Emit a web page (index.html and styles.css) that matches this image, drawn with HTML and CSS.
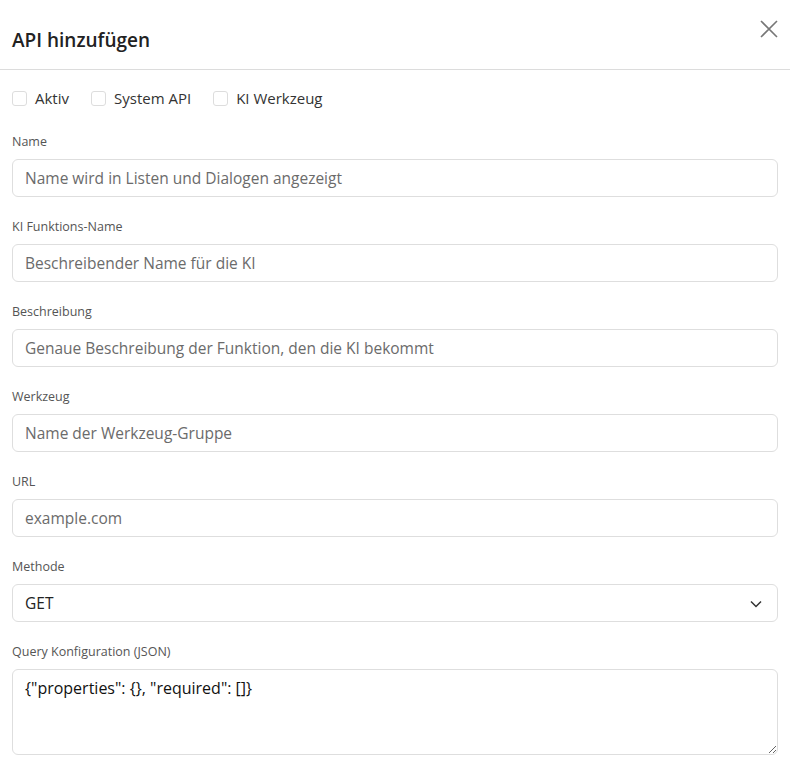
FILE: index.html
```html
<!DOCTYPE html>
<html lang="de">
<head>
    <meta charset="UTF-8">
    <meta name="viewport" content="width=device-width, initial-scale=1.0">
    <title>API hinzufügen</title>
    <link rel="stylesheet" href="styles.css">
</head>
<body>
    <div class="dialog">
        <div class="dialog-header">
            <h2>API hinzufügen</h2>
            <button class="close-btn" aria-label="Schließen">
                <svg width="18" height="18" viewBox="0 0 18 18"><path d="M1 1 L17 17 M17 1 L1 17" stroke="#777" stroke-width="1.6" fill="none"/></svg>
            </button>
        </div>
        <div class="dialog-body">
            <div class="checks">
                <label><input type="checkbox"> Aktiv</label>
                <label><input type="checkbox"> System API</label>
                <label><input type="checkbox"> KI Werkzeug</label>
            </div>
            <div class="field">
                <label for="name">Name</label>
                <input type="text" id="name" placeholder="Name wird in Listen und Dialogen angezeigt">
            </div>
            <div class="field">
                <label for="fname">KI Funktions-Name</label>
                <input type="text" id="fname" placeholder="Beschreibender Name für die KI">
            </div>
            <div class="field">
                <label for="desc">Beschreibung</label>
                <input type="text" id="desc" placeholder="Genaue Beschreibung der Funktion, den die KI bekommt">
            </div>
            <div class="field">
                <label for="tool">Werkzeug</label>
                <input type="text" id="tool" placeholder="Name der Werkzeug-Gruppe">
            </div>
            <div class="field">
                <label for="url">URL</label>
                <input type="text" id="url" placeholder="example.com">
            </div>
            <div class="field">
                <label for="method">Methode</label>
                <div class="select-wrap">
                    <select id="method">
                        <option>GET</option>
                        <option>POST</option>
                        <option>PUT</option>
                        <option>DELETE</option>
                    </select>
                    <svg class="chevron" width="12" height="8" viewBox="0 0 12 8"><path d="M1 1.5 L6 6.5 L11 1.5" stroke="#333" stroke-width="1.5" fill="none"/></svg>
                </div>
            </div>
            <div class="field">
                <label for="query">Query Konfiguration (JSON)</label>
                <textarea id="query">{"properties": {}, "required": []}</textarea>
            </div>
        </div>
    </div>
</body>
</html>
```

FILE: styles.css
```css
body {
    margin: 0;
    font-family: "Open Sans", "Noto Sans", Arial, sans-serif;
    background: #fff;
    color: #212529;
}
.dialog {
    width: 790px;
}
.dialog-header {
    display: flex;
    justify-content: space-between;
    align-items: center;
    height: 70px;
    padding: 0 12px;
    border-bottom: 1px solid #dcdcdc;
    box-sizing: border-box;
}
.dialog-header h2 {
    margin: 0;
    font-size: 19px;
    font-weight: 600;
    color: #222;
    padding-top: 10px;
}
.close-btn {
    border: none;
    background: none;
    padding: 0;
    margin-top: -12px;
    cursor: pointer;
    display: flex;
}
.dialog-body {
    padding: 18px 12px 0 12px;
}
.checks {
    display: flex;
    gap: 22px;
    margin-bottom: 25px;
}
.checks label {
    display: flex;
    align-items: center;
    gap: 8px;
    font-size: 15px;
    color: #333;
}
.checks input {
    appearance: none;
    width: 15px;
    height: 15px;
    margin: 0;
    border: 1px solid #ddd;
    border-radius: 3px;
    background: #fff;
}
.field {
    display: flex;
    flex-direction: column;
    margin-bottom: 21px;
}
.field label {
    font-size: 12.5px;
    color: #555;
    margin-bottom: 9px;
    line-height: 17px;
}
.field input,
.field select,
.field textarea {
    font-family: inherit;
    font-size: 15.5px;
    height: 38px;
    box-sizing: border-box;
    border: 1px solid #dedede;
    border-radius: 6px;
    padding: 0 12px;
    color: #222;
    background: #fff;
    width: 766px;
}
.field input::placeholder {
    color: #6b6b6b;
}
.select-wrap {
    position: relative;
}
.field select {
    appearance: none;
}
.chevron {
    position: absolute;
    right: 16px;
    top: 16px;
    pointer-events: none;
}
.field textarea {
    height: 86px;
    padding: 7px 12px;
    resize: vertical;
    color: #111;
    font-size: 16px;
}
```
